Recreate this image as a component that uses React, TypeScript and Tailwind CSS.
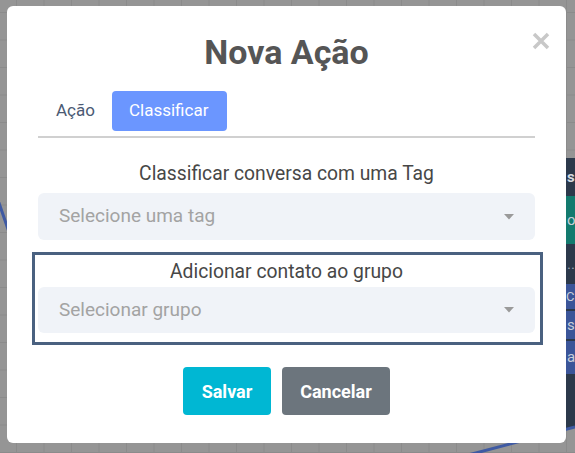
import React from 'react';

const font = "font-['Roboto','Liberation_Sans',sans-serif]";

const Caret = () => (
  <svg width="10" height="6" viewBox="0 0 10 6" className="shrink-0">
    <path d="M0 0 L10 0 L5 5.5 Z" fill="#9a9a9a" />
  </svg>
);

const SelectBox: React.FC<{ placeholder: string; className?: string }> = ({ placeholder, className = '' }) => (
  <div className={`flex items-center justify-between rounded-md bg-[#f0f3f8] pl-[21px] pr-[21px] ${className}`}>
    <span className="text-[19px] text-[#a3a3a3]">{placeholder}</span>
    <Caret />
  </div>
);

const Backdrop = () => (
  <div className="absolute inset-0 bg-[#959595] bg-[linear-gradient(#8b8b8b_1px,transparent_1px),linear-gradient(90deg,#8b8b8b_1px,transparent_1px)] bg-size-[27.5px_27.5px] bg-position-[16px_12px]">
    {/* side panel of the page underneath */}
    <div className="absolute left-[530px] top-[158px] w-[45px] h-[270px] flex flex-col overflow-hidden bg-[#2c394b] text-[15px] text-[#c9ced8]">
      <div className="h-[38px] flex items-center pl-[37px] font-bold text-[#d5d9e0]">s</div>
      <div className="h-[48px] flex items-center pl-[37px] bg-[#137a6e]">o</div>
      <div className="h-[40px] flex items-center pl-[37px] text-[#9aa3b0]">..</div>
      <div className="h-[25px] flex items-center pl-[36px] bg-[#3b5599] text-[13px]">C</div>
      <div className="h-[2px]" />
      <div className="h-[28px] flex items-center pl-[37px] bg-[#3b5599]">s</div>
      <div className="h-[2px]" />
      <div className="h-[33px] flex items-center pl-[37px] bg-[#3b5599]">a</div>
    </div>
    <svg className="absolute inset-0" width="575" height="453">
      <polyline points="-2,200 9,232" fill="none" stroke="#3f5aa3" strokeWidth="3" />
      <polyline points="468,455 575,427" fill="none" stroke="#3f5aa3" strokeWidth="3" />
    </svg>
  </div>
);

const App: React.FC = () => {
  return (
    <div className={`relative w-[575px] h-[453px] overflow-hidden ${font}`}>
      <Backdrop />

      <div className="relative flex pl-[7px] pt-[6px]">
        <div className="relative w-[559px] h-[437px] bg-white rounded-[6px] flex flex-col items-center pt-[26px] px-[32px]">
          {/* close */}
          <button className="absolute top-[26px] right-[16px] w-[18px] h-[18px] flex items-center justify-center">
            <svg width="18" height="18" viewBox="0 0 18 18">
              <path d="M2 2 L16 16 M16 2 L2 16" stroke="#c8c8c8" strokeWidth="3.5" strokeLinecap="butt" />
            </svg>
          </button>

          <h2 className="text-[34px] leading-[40px] font-bold text-[#555555]">Nova Ação</h2>

          {/* tabs */}
          <div className="mt-[19px] w-[497px] flex items-center border-b-2 border-[#d0d0d0] pb-[5px]">
            <div className="h-[40px] pl-[18px] pr-[17px] flex items-center text-[17px] text-[#4b5a74]">Ação</div>
            <div className="h-[40px] pl-[17px] pr-[19px] flex items-center rounded-[4px] bg-[#6b96ff] text-[17px] text-white">
              Classificar
            </div>
          </div>

          <div className="mt-[22px] w-[497px] flex flex-col">
            <p className="text-center text-[19.3px] leading-[27px] text-[#474747]">Classificar conversa com uma Tag</p>
            <SelectBox placeholder="Selecione uma tag" className="mt-[6px] h-[47px]" />

            <div className="mt-[12px] -ml-[6px] -mr-[8px] border-[3px] border-[#4a6180] pt-[3px] pb-[9px] pl-[3px] pr-[5px] flex flex-col">
              <p className="text-center text-[19.3px] leading-[27px] text-[#474747]">Adicionar contato ao grupo</p>
              <SelectBox placeholder="Selecionar grupo" className="mt-[2px] h-[46px]" />
            </div>
          </div>

          <div className="mt-[22px] flex gap-[11px]">
            <button className="w-[88px] h-[48px] rounded-[4px] bg-[#00b7d3] text-white text-[18px] font-bold">Salvar</button>
            <button className="w-[108px] h-[48px] rounded-[4px] bg-[#6c757d] text-white text-[18px] font-bold">Cancelar</button>
          </div>
        </div>
      </div>
    </div>
  );
};

export default App;
